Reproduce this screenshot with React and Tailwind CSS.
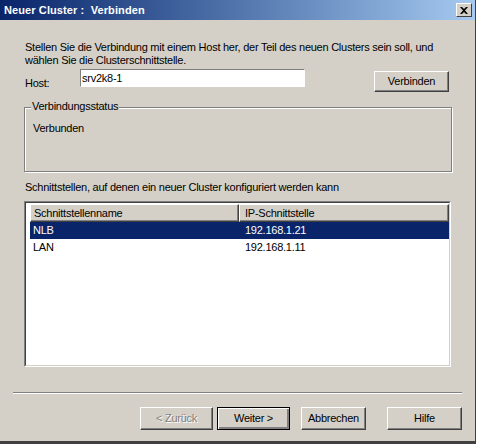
export default function App() {
  const font = { fontFamily: '"Liberation Sans", Arial, sans-serif' };
  return (
    <div className="w-[477px] h-[444px] bg-white overflow-hidden" style={font}>
      <div className="w-[476px] h-[444px] flex flex-col bg-[#d4d0c8] border-r border-[#404040] border-b-[3px] border-b-[#404040]">
        {/* title bar */}
        <div className="h-[20px] shrink-0 flex items-center justify-between pl-[4px] pr-[3px] bg-gradient-to-r from-[#0a246a] to-[#a6caf0]">
          <span className="text-white font-bold text-[11px] leading-none tracking-[0.1px] whitespace-pre">
            Neuer Cluster :  Verbinden
          </span>
          <div className="w-[16px] h-[14px] bg-[#d4d0c8] border border-t-white border-l-white border-r-[#404040] border-b-[#404040] flex items-center justify-center">
            <svg width="8" height="7" viewBox="0 0 8 7">
              <path d="M0 0h2l2 2 2-2h2L5 3.5 8 7H6L4 5 2 7H0l3-3.5z" fill="#000" />
            </svg>
          </div>
        </div>

        <div className="flex-1 flex flex-col pl-[24px] pr-[24px] text-[11px] text-black leading-[13px] tracking-[-0.25px]">
          <p className="mt-[21px] pl-[1px] whitespace-nowrap">
            Stellen Sie die Verbindung mit einem Host her, der Teil des neuen Clusters sein soll, und
            <br />
            wählen Sie die Clusterschnittstelle.
          </p>

          <div className="flex items-start mt-[2px]">
            <span className="pl-[1px] mt-[8px] w-[56px]">Host:</span>
            <div className="w-[225px] h-[18px] bg-white border border-t-[#808080] border-l-[#808080] border-r-white border-b-white flex items-center pl-[1px]">
              <span className="leading-none">srv2k8-1</span>
            </div>
            <div className="flex-1" />
            <button className="w-[75px] h-[21px] mt-[2px] mr-[2px] bg-[#d4d0c8] border border-t-white border-l-white border-r-[#404040] border-b-[#404040] shadow-[inset_-1px_-1px_0_#808080] text-[11px] leading-none">
              Verbinden
            </button>
          </div>

          {/* group box */}
          <div className="relative mt-[15px] h-[65px] w-[428px] border border-[#808080] shadow-[1px_1px_0_white,inset_1px_1px_0_white]">
            <span className="absolute -top-[8px] left-[6px] px-[1px] bg-[#d4d0c8]">Verbindungsstatus</span>
            <div className="pt-[14px] pl-[8px]">Verbunden</div>
          </div>

          <p className="mt-[9px] pl-[1px]">Schnittstellen, auf denen ein neuer Cluster konfiguriert werden kann</p>

          {/* list view */}
          <div className="mt-[7px] w-[427px] h-[166px] bg-white border border-t-[#808080] border-l-[#808080] border-r-white border-b-white">
            <div className="w-full h-full border border-t-[#404040] border-l-[#404040] border-r-[#d4d0c8] border-b-[#d4d0c8] pl-[4px] pt-[1px]">
              <div className="flex h-[18px]">
                <div className="w-[209px] bg-[#d4d0c8] border border-t-white border-l-white border-r-[#404040] border-b-[#404040] shadow-[inset_-1px_-1px_0_#808080] pl-[3px] flex items-center">Schnittstellenname</div>
                <div className="flex-1 bg-[#d4d0c8] border border-t-white border-l-white border-r-[#404040] border-b-[#404040] shadow-[inset_-1px_-1px_0_#808080] pl-[5px] flex items-center">IP-Schnittstelle</div>
              </div>
              <div className="flex h-[17px] items-center bg-[#0a246a] text-white">
                <div className="w-[209px] pl-[3px]">NLB</div>
                <div className="flex-1 pl-[6px]">192.168.1.21</div>
              </div>
              <div className="flex h-[17px] items-center">
                <div className="w-[209px] pl-[3px]">LAN</div>
                <div className="flex-1 pl-[6px]">192.168.1.11</div>
              </div>
            </div>
          </div>
        </div>

        {/* separator */}
        <div className="mx-[13px] mb-[13px] h-[2px] border-t border-t-[#808080] border-b border-b-white" />

        {/* buttons */}
        <div className="flex justify-end gap-[4px] pr-[13px] mb-[11px] text-[11px] tracking-[-0.25px]">
          <button className="w-[73px] h-[23px] bg-[#d4d0c8] border border-t-white border-l-white border-r-[#404040] border-b-[#404040] shadow-[inset_-1px_-1px_0_#808080] text-[#808080] [text-shadow:1px_1px_0_white] leading-none">
            &lt; Zurück
          </button>
          <button className="w-[73px] h-[23px] bg-[#d4d0c8] border border-black shadow-[inset_1px_1px_0_white,inset_-2px_-2px_0_#808080] leading-none">
            Weiter &gt;
          </button>
          <button className="ml-[7px] w-[65px] h-[23px] bg-[#d4d0c8] border border-t-white border-l-white border-r-[#404040] border-b-[#404040] shadow-[inset_-1px_-1px_0_#808080] leading-none">
            Abbrechen
          </button>
          <button className="ml-[17px] w-[75px] h-[23px] bg-[#d4d0c8] border border-t-white border-l-white border-r-[#404040] border-b-[#404040] shadow-[inset_-1px_-1px_0_#808080] leading-none">
            Hilfe
          </button>
        </div>
      </div>
    </div>
  );
}
